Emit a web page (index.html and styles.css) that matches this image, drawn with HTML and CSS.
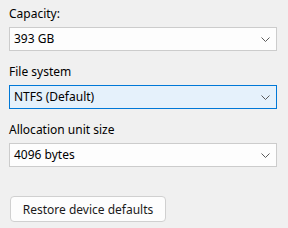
FILE: index.html
```html
<!DOCTYPE html>
<html>
<head>
<meta charset="utf-8">
<link rel="stylesheet" href="styles.css">
</head>
<body>
<div class="panel">
  <div class="field">
    <div class="label">Capacity:</div>
    <div class="combo"><span>393 GB</span><svg class="chev" width="9" height="5" viewBox="0 0 9 5"><path d="M0.5 0.5 L4.5 4.5 L8.5 0.5" fill="none" stroke="#5a5a5a" stroke-width="1"/></svg></div>
  </div>
  <div class="field">
    <div class="label">File system</div>
    <div class="combo active"><span>NTFS (Default)</span><svg class="chev" width="9" height="5" viewBox="0 0 9 5"><path d="M0.5 0.5 L4.5 4.5 L8.5 0.5" fill="none" stroke="#5a5a5a" stroke-width="1"/></svg></div>
  </div>
  <div class="field">
    <div class="label">Allocation unit size</div>
    <div class="combo"><span>4096 bytes</span><svg class="chev" width="9" height="5" viewBox="0 0 9 5"><path d="M0.5 0.5 L4.5 4.5 L8.5 0.5" fill="none" stroke="#5a5a5a" stroke-width="1"/></svg></div>
  </div>
  <div class="actions">
    <button class="btn">Restore device defaults</button>
  </div>
</div>
</body>
</html>
```
FILE: styles.css
```css
html, body {
  margin: 0;
  padding: 0;
  background: #f0f0f0;
}
body {
  font-family: "Noto Sans", "Open Sans", "Liberation Sans", sans-serif;
  font-size: 12px;
  color: #000;
}
.panel {
  width: 268px;
  padding: 6px 0 0 9px;
  display: flex;
  flex-direction: column;
  gap: 13px;
}
.field {
  display: flex;
  flex-direction: column;
  gap: 5px;
}
.label {
  line-height: 16px;
  height: 16px;
}
.combo {
  box-sizing: border-box;
  height: 24px;
  border: 1px solid #cccccc;
  background: #fdfdfd;
  display: flex;
  align-items: center;
  justify-content: space-between;
  padding: 0 6px 0 4px;
}
.combo span {
  line-height: 16px;
}
.combo.active {
  background: #e5f1fb;
  border-color: #0078d7;
}
.chev {
  display: block;
  margin-top: 1px;
}
.actions {
  padding-top: 16px;
}
.btn {
  box-sizing: border-box;
  height: 26px;
  width: 156px;
  margin-left: 1px;
  border: 1px solid #d0d0d0;
  border-radius: 4px;
  background: #fdfdfd;
  font-family: inherit;
  font-size: 12px;
  color: #1a1a1a;
  padding: 0;
}
```
